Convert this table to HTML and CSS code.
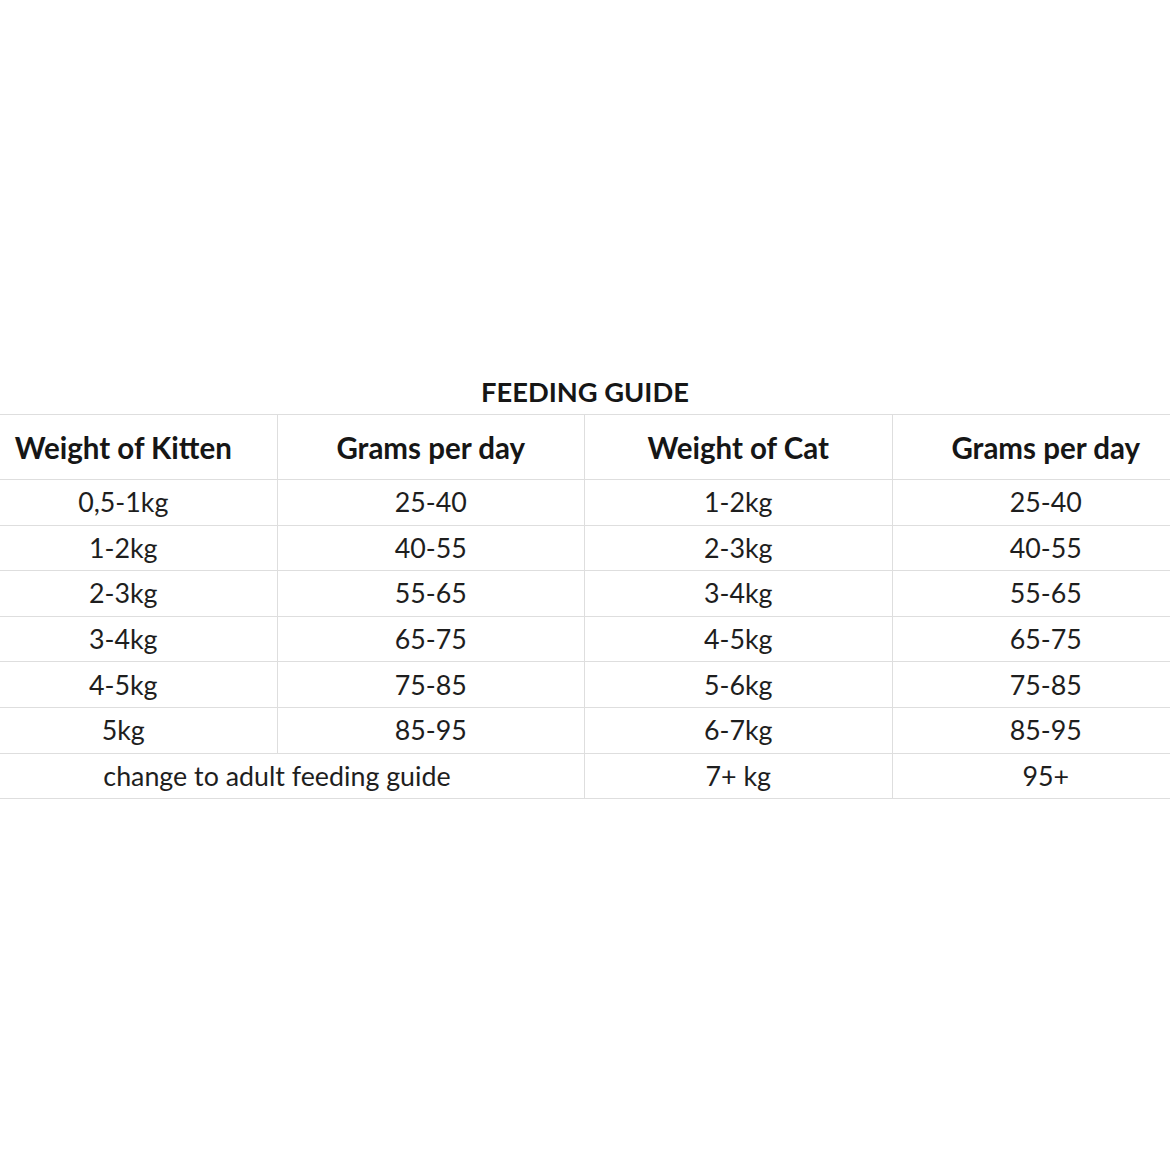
FILE: index.html
```html
<!DOCTYPE html>
<html>
<head>
<meta charset="utf-8">
<link rel="stylesheet" href="styles.css">
</head>
<body>
<div class="page">
  <h1 class="title">FEEDING GUIDE</h1>
  <div class="table-wrap">
    <table class="guide">
      <thead>
        <tr><th>Weight of Kitten</th><th>Grams per day</th><th>Weight of Cat</th><th>Grams per day</th></tr>
      </thead>
      <tbody>
        <tr><td>0,5-1kg</td><td>25-40</td><td>1-2kg</td><td>25-40</td></tr>
        <tr><td>1-2kg</td><td>40-55</td><td>2-3kg</td><td>40-55</td></tr>
        <tr><td>2-3kg</td><td>55-65</td><td>3-4kg</td><td>55-65</td></tr>
        <tr><td>3-4kg</td><td>65-75</td><td>4-5kg</td><td>65-75</td></tr>
        <tr><td>4-5kg</td><td>75-85</td><td>5-6kg</td><td>75-85</td></tr>
        <tr><td>5kg</td><td>85-95</td><td>6-7kg</td><td>85-95</td></tr>
        <tr><td colspan="2">change to adult feeding guide</td><td>7+ kg</td><td>95+</td></tr>
      </tbody>
    </table>
  </div>
</div>
</body>
</html>
```

FILE: styles.css
```css
html, body {
  margin: 0;
  padding: 0;
  background: #ffffff;
}
body {
  width: 1170px;
  height: 1170px;
  overflow: hidden;
  font-family: Lato, "Open Sans", sans-serif;
  color: #1e1e1e;
}
.page {
  padding-top: 374px;
}
.title {
  margin: 0;
  height: 40px;
  line-height: 36px;
  text-align: center;
  font-size: 27.3px;
  font-weight: 700;
  color: #161616;
}
.table-wrap {
  overflow: hidden;
  width: 1170px;
}
.guide {
  margin-left: -31px;
  width: 1231px;
  border-collapse: collapse;
  table-layout: fixed;
}
.guide th, .guide td {
  border: 1px solid #dedede;
  text-align: center;
  padding: 0;
}
.guide th {
  height: 64px;
  font-size: 29.5px;
  font-weight: 700;
  color: #161616;
}
.guide td {
  height: 44.6px;
  font-size: 26.8px;
  font-weight: 400;
}
```
